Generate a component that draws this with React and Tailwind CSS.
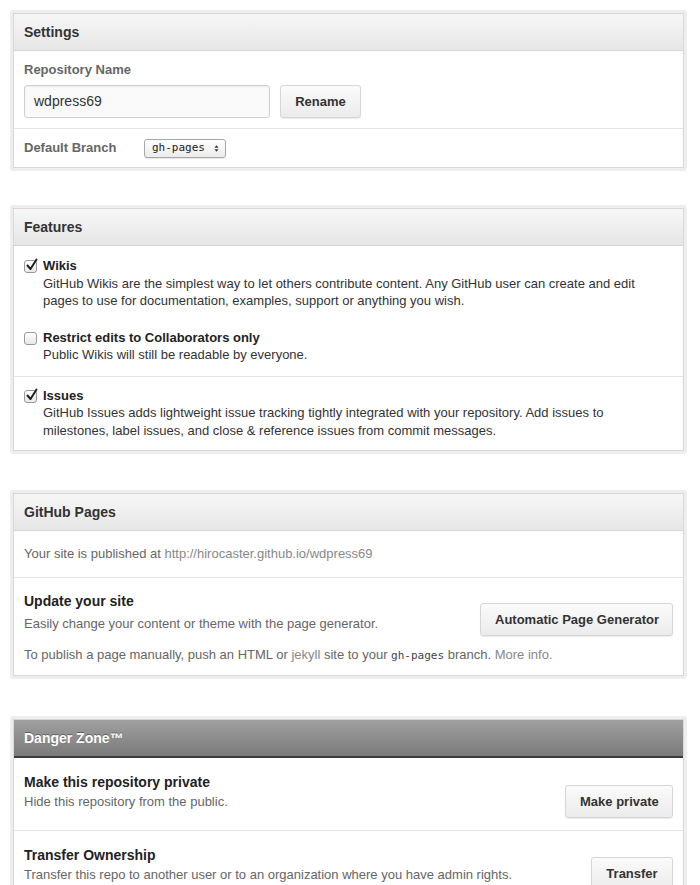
import React from "react"

const font = { fontFamily: '"Liberation Sans", Arial, sans-serif' }

// caja con el borde doble gris
const Panel = ({ title, danger, className = "", children }) => (
  <div className={`border-[3px] border-[#eeeeee] rounded-[3px] ${className}`}>
    <div className="border border-[#d8d8d8] bg-white">
      {danger ? (
        <div className="h-[38px] flex items-center px-[10px] bg-gradient-to-b from-[#a0a0a0] to-[#7a7a7a] border-b-2 border-[#3a3a3a] text-white font-bold text-[14px] [text-shadow:0_-1px_0_rgba(0,0,0,0.35)]">
          {title}
        </div>
      ) : (
        <div className="h-[37px] flex items-center px-[10px] bg-gradient-to-b from-[#f7f7f7] to-[#e6e6e6] border-b border-[#d4d4d4] text-[#333] font-bold text-[14px]">
          {title}
        </div>
      )}
      {children}
    </div>
  </div>
)

const Button = ({ children, className = "" }) => (
  <button className={`h-[33px] px-[14px] rounded-[3px] border border-[#d6d6d6] bg-gradient-to-b from-[#fbfbfb] to-[#ebebeb] shadow-[0_1px_1px_rgba(0,0,0,0.08)] text-[13px] font-bold text-[#333] whitespace-nowrap ${className}`}>
    {children}
  </button>
)

const Checkbox = ({ checked }) => (
  <span className="mt-[3px] shrink-0 w-[13px] h-[13px] rounded-[3px] border border-[#9a9a9a] bg-gradient-to-b from-white to-[#e8e8e8] relative">
    {checked && (
      <svg viewBox="0 0 14 14" className="absolute -top-[3px] left-[0px] w-[14px] h-[14px]">
        <path d="M2.5 7.5 L5.5 11 L11.5 1.5" fill="none" stroke="#222" strokeWidth="2" strokeLinecap="round" strokeLinejoin="round" />
      </svg>
    )}
  </span>
)

const Feature = ({ checked, title, children }) => (
  <div className="flex gap-[6px]">
    <Checkbox checked={checked} />
    <div className="text-[13px] leading-[17.5px]">
      <div className="font-bold text-[#222]">{title}</div>
      <div className="text-[#333]">{children}</div>
    </div>
  </div>
)

export default function App() {
  return (
    <div style={font} className="bg-white min-h-screen pl-[10px] pr-[13px] pt-[10px]">
      {/* Settings */}
      <Panel title="Settings">
        <div className="px-[10px] pt-[10px] pb-[10px]">
          <div className="text-[13px] font-bold text-[#666] leading-[18px]">Repository Name</div>
          <div className="flex gap-[10px] mt-[6px]">
            <div className="w-[246px] h-[33px] flex items-center px-[9px] rounded-[3px] border border-[#d0d0d0] bg-[#fafafa] shadow-[inset_0_1px_2px_rgba(0,0,0,0.06)] text-[14px] text-[#333]">
              wdpress69
            </div>
            <Button className="w-[81px]">Rename</Button>
          </div>
        </div>
        <div className="border-t border-[#e5e5e5] h-[39px] flex items-center px-[10px]">
          <div className="w-[120px] text-[13px] font-bold text-[#666]">Default Branch</div>
          <div className="w-[82px] h-[19px] flex items-center justify-between pl-[7px] pr-[6px] rounded-[3px] border border-[#a8a8a8] bg-gradient-to-b from-white to-[#ececec] shadow-[0_1px_1px_rgba(0,0,0,0.1)]">
            <span className="text-[#222]" style={{ fontFamily: '"DejaVu Sans Mono", monospace', fontSize: "11px" }}>gh-pages</span>
            <svg viewBox="0 0 6 10" className="w-[5px] h-[9px]">
              <path d="M3 1 L5.5 4 H0.5 Z M3 9 L5.5 6 H0.5 Z" fill="#333" />
            </svg>
          </div>
        </div>
      </Panel>

      {/* Features */}
      <Panel title="Features" className="mt-[34px]">
        <div className="px-[10px] pt-[11px] pb-[12px] flex flex-col gap-[19px]">
          <Feature checked title="Wikis">
            GitHub Wikis are the simplest way to let others contribute content. Any GitHub user can create and edit
            <br />
            pages to use for documentation, examples, support or anything you wish.
          </Feature>
          <Feature title="Restrict edits to Collaborators only">
            Public Wikis will still be readable by everyone.
          </Feature>
        </div>
        <div className="border-t border-[#e5e5e5] px-[10px] pt-[10px] pb-[11px]">
          <Feature checked title="Issues">
            GitHub Issues adds lightweight issue tracking tightly integrated with your repository. Add issues to
            <br />
            milestones, label issues, and close &amp; reference issues from commit messages.
          </Feature>
        </div>
      </Panel>

      {/* GitHub Pages */}
      <Panel title="GitHub Pages" className="mt-[36px]">
        <div className="h-[46px] flex items-center px-[10px] text-[13px] text-[#666]">
          <span>Your site is published at&nbsp;</span>
          <span className="text-[#888]">http://hirocaster.github.io/wdpress69</span>
        </div>
        <div className="border-t border-[#e5e5e5] px-[10px] pt-[13px] pb-[10px]">
          <div className="flex items-start justify-between">
            <div>
              <div className="text-[14px] font-bold text-[#222] leading-[20px]">Update your site</div>
              <div className="text-[13px] text-[#666] mt-[4px] leading-[18px]">Easily change your content or theme with the page generator.</div>
            </div>
            <Button className="mt-[12px] w-[193px]">Automatic Page Generator</Button>
          </div>
          <div className="text-[13px] text-[#666] mt-[10px] leading-[18px]">
            To publish a page manually, push an HTML or <span className="text-[#888]">jekyll</span> site to your{" "}
            <span className="text-[#444]" style={{ fontFamily: '"DejaVu Sans Mono", monospace', fontSize: "11px" }}>gh-pages</span> branch.{" "}
            <span className="text-[#888]">More info.</span>
          </div>
        </div>
      </Panel>

      {/* Danger zone */}
      <Panel title="Danger Zone™" danger className="mt-[37px]">
        <div className="flex items-start justify-between px-[10px] pt-[14px] pb-[12px]">
          <div>
            <div className="text-[14px] font-bold text-[#222] leading-[20px]">Make this repository private</div>
            <div className="text-[13px] text-[#666] mt-[1px] leading-[18px]">Hide this repository from the public.</div>
          </div>
          <Button className="mt-[13px] w-[108px]">Make private</Button>
        </div>
        <div className="border-t border-[#e5e5e5] flex items-start justify-between px-[10px] pt-[14px] pb-[12px]">
          <div>
            <div className="text-[14px] font-bold text-[#222] leading-[20px]">Transfer Ownership</div>
            <div className="text-[13px] text-[#666] mt-[1px] leading-[18px]">Transfer this repo to another user or to an organization where you have admin rights.</div>
          </div>
          <Button className="mt-[12px] w-[82px]">Transfer</Button>
        </div>
      </Panel>
    </div>
  )
}
